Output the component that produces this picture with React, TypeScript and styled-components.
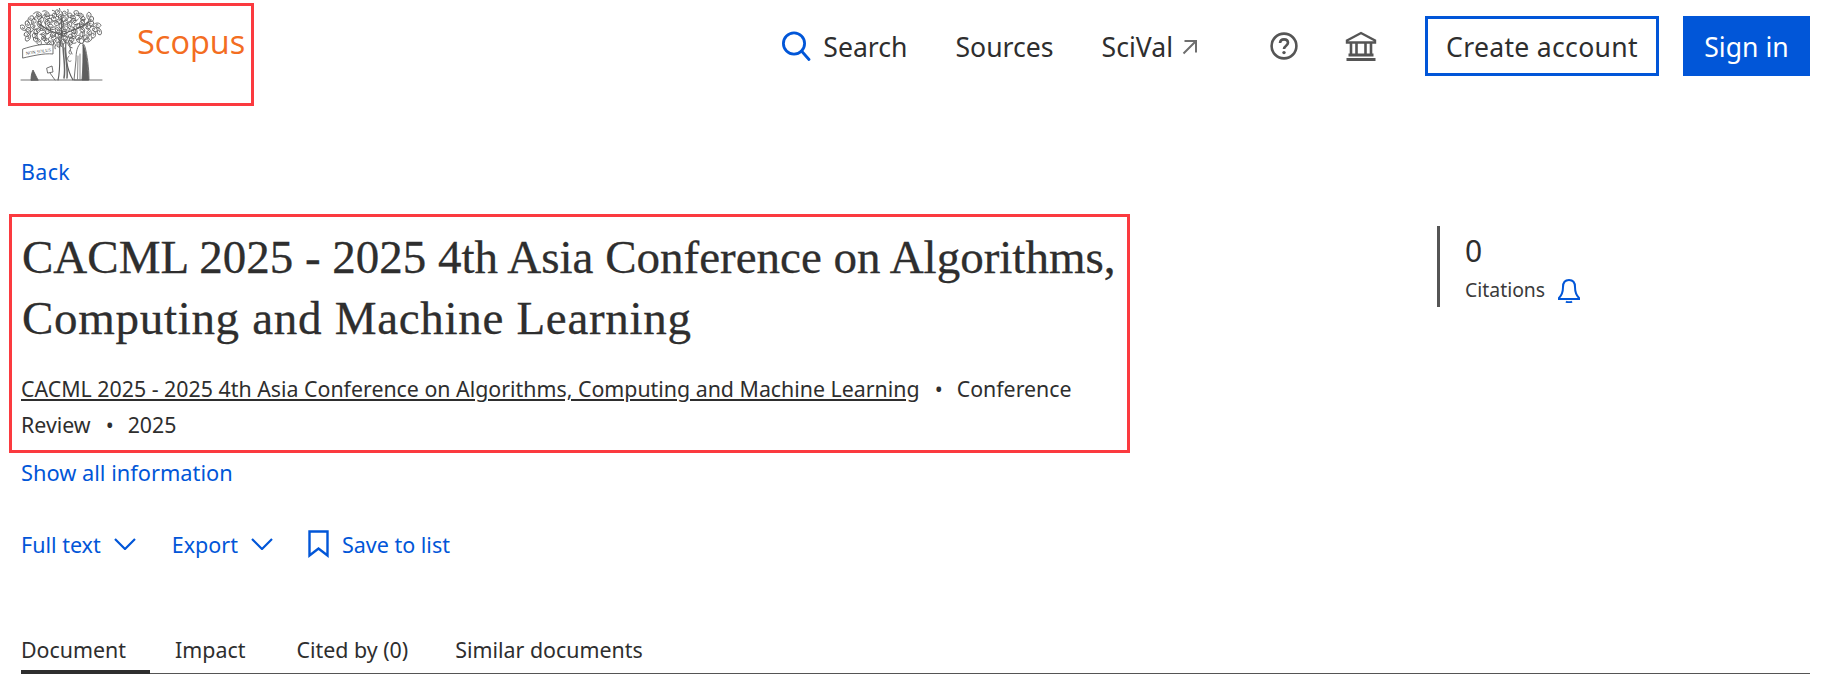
import styled, { createGlobalStyle } from "styled-components";

const GlobalStyle = createGlobalStyle`
  html, body {
    margin: 0;
    padding: 0;
    background: #fff;
    color: #2e2e2e;
    font-family: "Noto Sans", "Open Sans", sans-serif;
  }
  * { box-sizing: border-box; }
`;

const BLUE = "#0156d8";
const RED = "#fb3a3f";

const Page = styled.div`
  width: 1838px;
  height: 674px;
  overflow: hidden;
  padding: 0 28px 0 21px;
`;

const Header = styled.header`
  display: flex;
  align-items: flex-start;
  justify-content: space-between;
  height: 159px;
  padding-top: 3px;
`;

const LogoBox = styled.a`
  display: flex;
  align-items: flex-start;
  width: 246px;
  height: 103px;
  margin-left: -13px;
  padding: 2px 0 0 9px;
  border: 3px solid ${RED};
`;

const Wordmark = styled.span`
  margin: 12px 0 0 33px;
  font-family: "Open Sans", sans-serif;
  font-size: 32.5px;
  line-height: 44px;
  color: #f36d21;
`;

const Nav = styled.nav`
  display: flex;
  align-items: center;
  height: 60px;
  margin-top: 13px;
`;

const NavLink = styled.a<{ $gap: number }>`
  display: flex;
  align-items: center;
  gap: 9px;
  margin-right: ${(p) => p.$gap}px;
  padding-top: 1px;
  font-size: 26.6px;
  color: #2e2e2e;
`;

const IconSlot = styled.span<{ $gap: number }>`
  display: flex;
  margin-right: ${(p) => p.$gap}px;
`;

const NavButton = styled.a<{ $primary?: boolean; $width: number }>`
  display: flex;
  align-items: center;
  justify-content: center;
  width: ${(p) => p.$width}px;
  height: 60px;
  padding-top: 1px;
  border: 3px solid ${BLUE};
  margin-left: ${(p) => (p.$primary ? 24 : 0)}px;
  font-size: 26.6px;
  letter-spacing: ${(p) => (p.$primary ? 0 : 0.3)}px;
  color: ${(p) => (p.$primary ? "#fff" : "#2e2e2e")};
  background: ${(p) => (p.$primary ? BLUE : "#fff")};
`;

const BackLink = styled.a`
  display: block;
  height: 60px;
  font-size: 21.4px;
  letter-spacing: 0.4px;
  line-height: 26px;
  color: ${BLUE};
`;

const Main = styled.div`
  display: flex;
  align-items: flex-start;
`;

const TitleBox = styled.section`
  width: 1121px;
  height: 239px;
  margin: -5px 0 0 -12px;
  padding: 10px 10px 0 10px;
  border: 3px solid ${RED};
`;

const Title = styled.h1`
  margin: 0;
  font-family: "Liberation Serif", serif;
  font-size: 47px;
  font-weight: 400;
  line-height: 61px;
  color: #2e2e2e;
  -webkit-text-stroke: 0.3px #2e2e2e;
`;

const TitleLine = styled.span<{ $spacing?: number }>`
  display: block;
  letter-spacing: ${(p) => p.$spacing ?? 0}px;
`;

const Meta = styled.div`
  margin: 22px 0 0 -1px;
  font-size: 21.35px;
  line-height: 36px;
`;

const MetaLine = styled.div`
  display: flex;
  white-space: nowrap;
`;

const SourceLink = styled.a`
  text-decoration: underline;
`;

const Dot = styled.span`
  margin: 0 14px 0 15px;
`;

const Citations = styled.aside`
  display: flex;
  flex-direction: column;
  width: 200px;
  height: 81px;
  margin: 7px 0 0 307px;
  padding-left: 25px;
  border-left: 3px solid #555;
`;

const Count = styled.span`
  font-size: 30px;
  line-height: 40px;
  margin-top: 5px;
`;

const CitationLabel = styled.span`
  display: flex;
  align-items: center;
  gap: 12px;
  font-size: 19.4px;
  line-height: 28px;
  margin-top: 5px;
  color: #3a3a3a;
`;

const ShowAll = styled.a`
  display: block;
  margin-top: 4px;
  font-size: 21.8px;
  line-height: 32px;
  color: ${BLUE};
`;

const Actions = styled.div`
  display: flex;
  align-items: center;
  height: 36px;
  margin-top: 37px;
`;

const ActionLink = styled.a<{ $gap: number }>`
  display: flex;
  align-items: center;
  gap: 13px;
  margin-right: ${(p) => p.$gap}px;
  font-size: 21.5px;
  color: ${BLUE};
`;

const Tabs = styled.div`
  display: flex;
  height: 57px;
  margin-top: 56px;
  border-bottom: 2px solid #555;
`;

const Tab = styled.a<{ $active?: boolean; $gap?: number }>`
  height: 57px;
  margin-right: ${(p) => p.$gap ?? 49}px;
  padding-top: 17px;
  font-size: 21.4px;
  line-height: 30px;
  color: #2e2e2e;
  ${(p) =>
    p.$active &&
    `
    width: 129px;
    margin-right: 25px;
    border-bottom: 5px solid #2e2e2e;
  `}
`;

// leaves of the crown, placed with a fixed sequence so they stay put between renders
const leaves = Array.from({ length: 78 }, (_, i) => {
  const a = (i * 137.5 * Math.PI) / 180;
  const r = Math.sqrt((i + 0.5) / 78);
  return {
    x: 41 + Math.cos(a) * r * 39,
    y: 20 + Math.sin(a) * r * 18,
    t: (i * 53) % 360,
  };
});

const TreeLogo = () => (
  <svg width="84" height="76" viewBox="0 0 84 76" fill="none" stroke="#5a5a5a" strokeWidth="0.85" strokeLinecap="round">
    {leaves.map((l, i) => (
      <path
        key={i}
        d="M-4 1C-3-3 3-3 4 0C3 3-1 3-1 0C0-1 1-1 1 0"
        transform={`translate(${l.x.toFixed(1)} ${l.y.toFixed(1)}) rotate(${l.t})`}
      />
    ))}
    {/* branches and trunk */}
    <path d="M41 34C41 26 43 18 41 8M43 28C36 24 28 24 20 16M44 26C50 22 60 22 68 14" strokeWidth="1.2" />
    <path d="M38 72C41 60 39 46 40 32M53 72C47 62 45 46 46 32" strokeWidth="1.1" />
    <path d="M44 70C46 60 43 48 43 36M47 70C48 64 46 52 45 40" strokeWidth="1.5" stroke="#666" />
    {/* banner */}
    <path d="M3 41C12 38 24 35 33 37L33 46C24 45 12 48 3 50Z" fill="#fff" />
    <text x="6" y="47" fontSize="4.6" fill="#555" stroke="none" fontFamily="Liberation Serif, serif" transform="rotate(-8 6 47)">
      NON SOLUS
    </text>
    {/* vine on the trunk */}
    <path d="M48 32C51 36 49 42 52 46M49 48C46 50 48 55 51 53M50 42C48 44 49 47 51 46" />
    {/* figure with a dark robe on its right side */}
    <path d="M61 35C57 38 56 44 56 52L54 72L69 72C69 60 67 46 65 39C64 36 63 35 61 35Z" fill="#fff" />
    <path d="M63 37C66 42 68 58 68.5 72L62 72C63 60 63 48 63 37Z" fill="#5f5f5f" />
    <path d="M58 48L57.5 71M60 46L60 71" strokeWidth="0.7" />
    <circle cx="61.5" cy="33" r="2.4" fill="#fff" />
    {/* ground and plants */}
    <path d="M1 72H82" />
    <path d="M11 72C11 67 12 64 13 62C15 65 16 69 18 72Z" fill="#666" />
    <path d="M27 60L32 58L33 64L28 65ZM30 65L35 72" />
  </svg>
);

const SearchIcon = () => (
  <svg width="30" height="30" viewBox="0 0 30 30" fill="none" stroke={BLUE} strokeWidth="2.8">
    <circle cx="13" cy="12.5" r="10.6" />
    <path d="M20.5 20L28 28.5" strokeLinecap="round" />
  </svg>
);

const ExternalIcon = () => (
  <svg width="16" height="16" viewBox="0 0 16 16" fill="none" stroke="#6e6e6e" strokeWidth="2">
    <path d="M1.5 14.5L14 2M2.5 2H14V13.5" />
  </svg>
);

const HelpIcon = () => (
  <svg width="30" height="30" viewBox="0 0 30 30" fill="none" stroke="#555" strokeWidth="2.6">
    <circle cx="15" cy="15" r="12.4" />
    <path d="M11 12C11.2 9.6 12.8 8.4 15 8.4C17.4 8.4 19 9.8 19 11.8C19 14.6 15 14.8 15 18" strokeWidth="2.6" />
    <circle cx="15" cy="21.6" r="1.7" fill="#555" stroke="none" />
  </svg>
);

const BankIcon = () => (
  <svg width="32" height="32" viewBox="0 0 32 32" fill="none" stroke="#555" strokeWidth="2.4">
    <path d="M2 10.5L16 3L30 10.5V12.5H2Z" />
    <path d="M6 13V24M11.5 13V24M20.5 13V24M26 13V24" strokeWidth="2.6" />
    <path d="M3.5 25H28.5M1.5 29.5H30.5" strokeWidth="2.8" />
  </svg>
);

const BellIcon = () => (
  <svg width="24" height="25" viewBox="0 0 24 25" fill="none" stroke={BLUE} strokeWidth="2">
    <path d="M2 20C5 17 6 14 6 9C6 4.5 8.5 2 12 2C15.5 2 18 4.5 18 9C18 14 19 17 22 20V21H2Z" />
    <path d="M9 23.5C10.5 24.6 13.5 24.6 15 23.5" />
  </svg>
);

const ChevronIcon = () => (
  <svg width="22" height="12" viewBox="0 0 22 12" fill="none" stroke={BLUE} strokeWidth="2.2">
    <path d="M1 1L11 11L21 1" />
  </svg>
);

const BookmarkIcon = () => (
  <svg width="21" height="28" viewBox="0 0 21 28" fill="none" stroke={BLUE} strokeWidth="2.4">
    <path d="M1.5 1.5H19.5V25.5L10.5 18.5L1.5 25.5Z" />
  </svg>
);

const App = () => (
  <Page>
    <GlobalStyle />
    <Header>
      <LogoBox>
        <TreeLogo />
        <Wordmark>Scopus</Wordmark>
      </LogoBox>
      <Nav>
        <IconSlot $gap={12}>
          <SearchIcon />
        </IconSlot>
        <NavLink $gap={48}>Search</NavLink>
        <NavLink $gap={48}>Sources</NavLink>
        <NavLink $gap={71}>
          SciVal
          <ExternalIcon />
        </NavLink>
        <IconSlot $gap={46}>
          <HelpIcon />
        </IconSlot>
        <IconSlot $gap={48}>
          <BankIcon />
        </IconSlot>
        <NavButton $width={234}>Create account</NavButton>
        <NavButton $primary $width={127}>
          Sign in
        </NavButton>
      </Nav>
    </Header>
    <BackLink>Back</BackLink>
    <Main>
      <TitleBox>
        <Title>
          <TitleLine>CACML 2025 - 2025 4th Asia Conference on Algorithms,</TitleLine>
          <TitleLine $spacing={0.7}>Computing and Machine Learning</TitleLine>
        </Title>
        <Meta>
          <MetaLine>
            <SourceLink>CACML 2025 - 2025 4th Asia Conference on Algorithms, Computing and Machine Learning</SourceLink>
            <Dot>•</Dot>
            <span>Conference</span>
          </MetaLine>
          <MetaLine>
            <span>Review</span>
            <Dot>•</Dot>
            <span>2025</span>
          </MetaLine>
        </Meta>
      </TitleBox>
      <Citations>
        <Count>0</Count>
        <CitationLabel>
          Citations
          <BellIcon />
        </CitationLabel>
      </Citations>
    </Main>
    <ShowAll>Show all information</ShowAll>
    <Actions>
      <ActionLink $gap={36}>
        Full text
        <ChevronIcon />
      </ActionLink>
      <ActionLink $gap={35}>
        Export
        <ChevronIcon />
      </ActionLink>
      <ActionLink $gap={0}>
        <BookmarkIcon />
        Save to list
      </ActionLink>
    </Actions>
    <Tabs>
      <Tab $active>Document</Tab>
      <Tab $gap={51}>Impact</Tab>
      <Tab $gap={47}>Cited by (0)</Tab>
      <Tab>Similar documents</Tab>
    </Tabs>
  </Page>
);

export default App;
